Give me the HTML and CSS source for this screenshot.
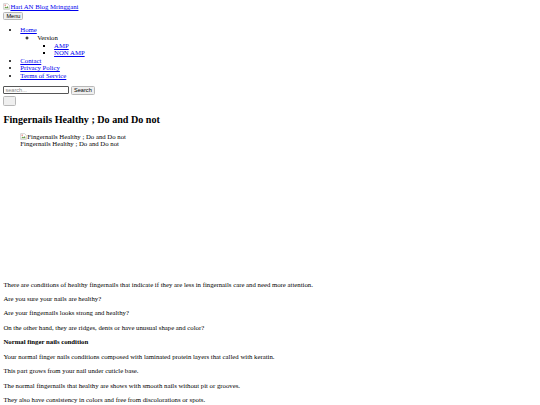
FILE: index.html
```html
<!DOCTYPE html>
<html lang="en">
<head>
  <meta charset="UTF-8" />
  <meta name="viewport" content="width=device-width, initial-scale=1.0"/>
  <title>Fingernails Healthy ; Do and Do not</title>
  <link rel="stylesheet" href="styles.css">
</head>
<body class="page">

  <!-- Header -->
  <header class="site-header">
    <a class="logo" href="#"><svg class="broken" viewBox="0 0 16 16"><path d="M1.5 1.5h9l4 4v9h-13z" fill="#fff" stroke="#999"/><path d="M3 12l3-4 2 2 2-3 3 5z" fill="#6a9a4a"/><circle cx="5" cy="5" r="1.3" fill="#d44"/></svg>Hari AN Blog Mringgani</a>
    <div><button class="btn btn-menu" type="button">Menu</button></div>
  </header>

  <!-- Navigation -->
  <nav>
    <ul class="menu">
      <li><a href="#">Home</a>
        <ul class="sub">
          <li>Version
            <ul class="sub sub-deep">
              <li><a href="#">AMP</a></li>
              <li><a href="#">NON AMP</a></li>
            </ul>
          </li>
        </ul>
      </li>
      <li><a href="#">Contact</a></li>
      <li><a href="#">Privacy Policy</a></li>
      <li><a href="#">Terms of Service</a></li>
    </ul>
  </nav>

  <form class="search">
    <input class="search-input" type="text" placeholder="search..." />
    <button class="btn btn-search" type="submit">Search</button>
  </form>
  <div><button class="btn btn-empty" type="button"></button></div>

  <article>
    <h1 class="title">Fingernails Healthy ; Do and Do not</h1>

    <figure class="thumb">
      <div><svg class="broken" viewBox="0 0 16 16"><path d="M1.5 1.5h9l4 4v9h-13z" fill="#fff" stroke="#999"/><path d="M3 12l3-4 2 2 2-3 3 5z" fill="#6a9a4a"/><circle cx="5" cy="5" r="1.3" fill="#d44"/></svg>Fingernails Healthy ; Do and Do not</div>
      <figcaption>Fingernails Healthy ; Do and Do not</figcaption>
    </figure>

    <!-- ad slot -->
    <div class="ad-slot"></div>

    <p>There are conditions of healthy fingernails that indicate if they are less in fingernails care and need more attention.</p>
    <p>Are you sure your nails are healthy?</p>
    <p>Are your fingernails looks strong and healthy?</p>
    <p>On the other hand, they are ridges, dents or have unusual shape and color?</p>
    <p><strong>Normal finger nails condition</strong></p>
    <p>Your normal finger nails conditions composed with laminated protein layers that called with keratin.</p>
    <p>This part grows from your nail under cuticle base.</p>
    <p>The normal fingernails that healthy are shows with smooth nails without pit or grooves.</p>
    <p>They also have consistency in colors and free from discolorations or spots.</p>
  </article>

</body>
</html>
```

FILE: styles.css
```css
body {
  font-family: "Liberation Serif", "Times New Roman", serif;
  font-size: 6.75px;
  line-height: 7.6px;
  color: #000;
  background: #fff;
  margin: 3.4px;
}

a {
  color: #0000ee;
}

.broken {
  width: 7px;
  height: 7px;
  vertical-align: -1px;
}

.logo {
  display: inline-block;
}

.btn {
  font-family: Arial, "Liberation Sans", sans-serif;
  font-size: 5.6px;
  background: #efefef;
  color: #000;
  border: 1px solid #b8b8b8;
  border-radius: 1.5px;
  padding: 0 3px;
  margin: 0;
  line-height: 6px;
  box-sizing: border-box;
}

.btn-menu {
  height: 8px;
  width: 20px;
  padding: 0;
  margin-top: 0.7px;
}

.menu {
  margin: 6.75px 0 6px;
  padding-left: 16.9px;
  list-style-type: disc;
}

.sub {
  margin: 0;
  padding-left: 16.9px;
  list-style-type: circle;
}

.sub-deep {
  list-style-type: square;
}

.search {
  display: flex;
  align-items: center;
  gap: 1.5px;
  margin: 0;
}

.search-input {
  width: 66px;
  height: 8.6px;
  box-sizing: border-box;
  font-family: Arial, "Liberation Sans", sans-serif;
  font-size: 5.6px;
  padding: 0 1px;
  margin: 0;
  border: 1px solid #555;
  border-radius: 1px;
}

.search-input::placeholder {
  color: #888;
}

.btn-search {
  width: 24px;
  height: 9px;
  padding: 0;
}

.btn-empty {
  width: 13px;
  height: 10px;
  padding: 0;
  margin-top: 1px;
}

.title {
  font-size: 10.1px;
  line-height: 11.6px;
  margin: 7.6px 0 7.4px;
}

.thumb {
  margin: 6.75px 16.9px;
}

.ad-slot {
  height: 119px;
}

p {
  margin: 6.85px 0;
}
```
